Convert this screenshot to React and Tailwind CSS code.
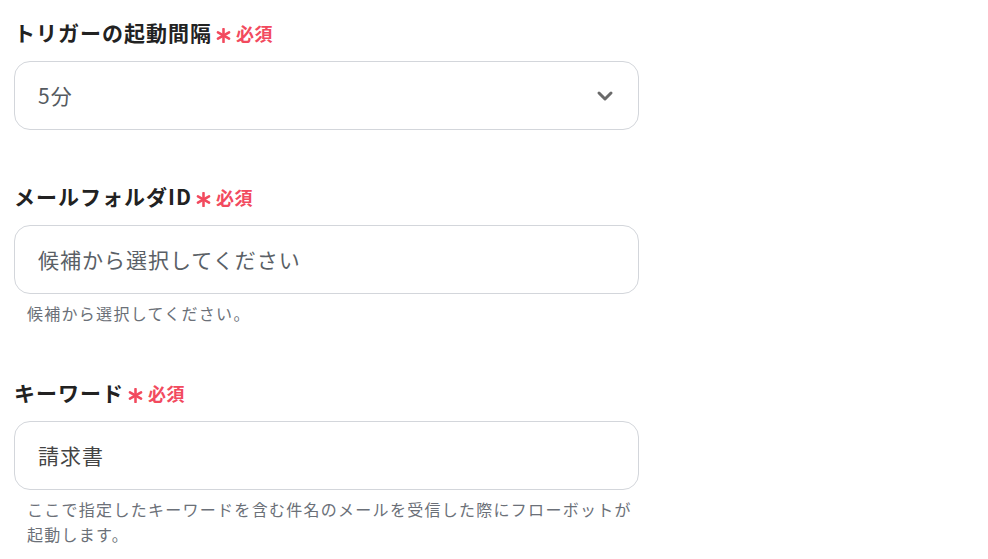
import { ChevronDown } from 'lucide-react'

function Required() {
  return (
    <span className="ml-[4px] inline-flex items-center gap-[5px] text-[#f24a5e]">
      <svg width="15" height="15" viewBox="0 0 14 14" className="mt-[5px]">
        <g stroke="#f24a5e" strokeWidth="2.4" strokeLinecap="round">
          <line x1="7" y1="1" x2="7" y2="13" />
          <line x1="1.8" y1="4" x2="12.2" y2="10" />
          <line x1="1.8" y1="10" x2="12.2" y2="4" />
        </g>
      </svg>
      <span className="text-[18px] font-bold tracking-[0.5px]">必須</span>
    </span>
  )
}

function Field({ label, children, help }) {
  return (
    <div className="flex flex-col">
      <div className="flex items-center h-[28px] mb-[14px]">
        <span className="text-[21px] font-bold tracking-[1px] text-[#222]">{label}</span>
        <Required />
      </div>
      {children}
      {help && (
        <p className="mt-[7px] pl-[13px] w-[624px] text-[16px] leading-[25px] tracking-[0.08em] text-[#6b7078]">
          {help}
        </p>
      )}
    </div>
  )
}

export default function App() {
  return (
    <div
      className="min-h-[559px] bg-white pl-[14px] pt-[19px] flex flex-col gap-[53px]"
      style={{ fontFamily: '"Noto Sans CJK JP", "Noto Sans", sans-serif' }}
    >
      <Field label="トリガーの起動間隔">
        <div className="w-[625px] h-[69px] border border-[#d3d6db] rounded-[16px] flex items-center justify-between pl-[23px] pr-[21px]">
          <span className="text-[21px] tracking-[1px] text-[#555a60]">5分</span>
          <ChevronDown className="w-[24px] h-[24px] text-[#6a6a6a]" strokeWidth={3} />
        </div>
      </Field>

      <Field label="メールフォルダID" help="候補から選択してください。">
        <div className="w-[625px] h-[69px] border border-[#d3d6db] rounded-[16px] flex items-center pl-[23px]">
          <span className="text-[21px] tracking-[1px] text-[#5a5f66]">候補から選択してください</span>
        </div>
      </Field>

      <Field
        label="キーワード"
        help="ここで指定したキーワードを含む件名のメールを受信した際にフローボットが起動します。"
      >
        <div className="w-[625px] h-[69px] border border-[#d3d6db] rounded-[16px] flex items-center pl-[23px]">
          <span className="text-[21px] tracking-[1px] text-[#444]">請求書</span>
        </div>
      </Field>
    </div>
  )
}
